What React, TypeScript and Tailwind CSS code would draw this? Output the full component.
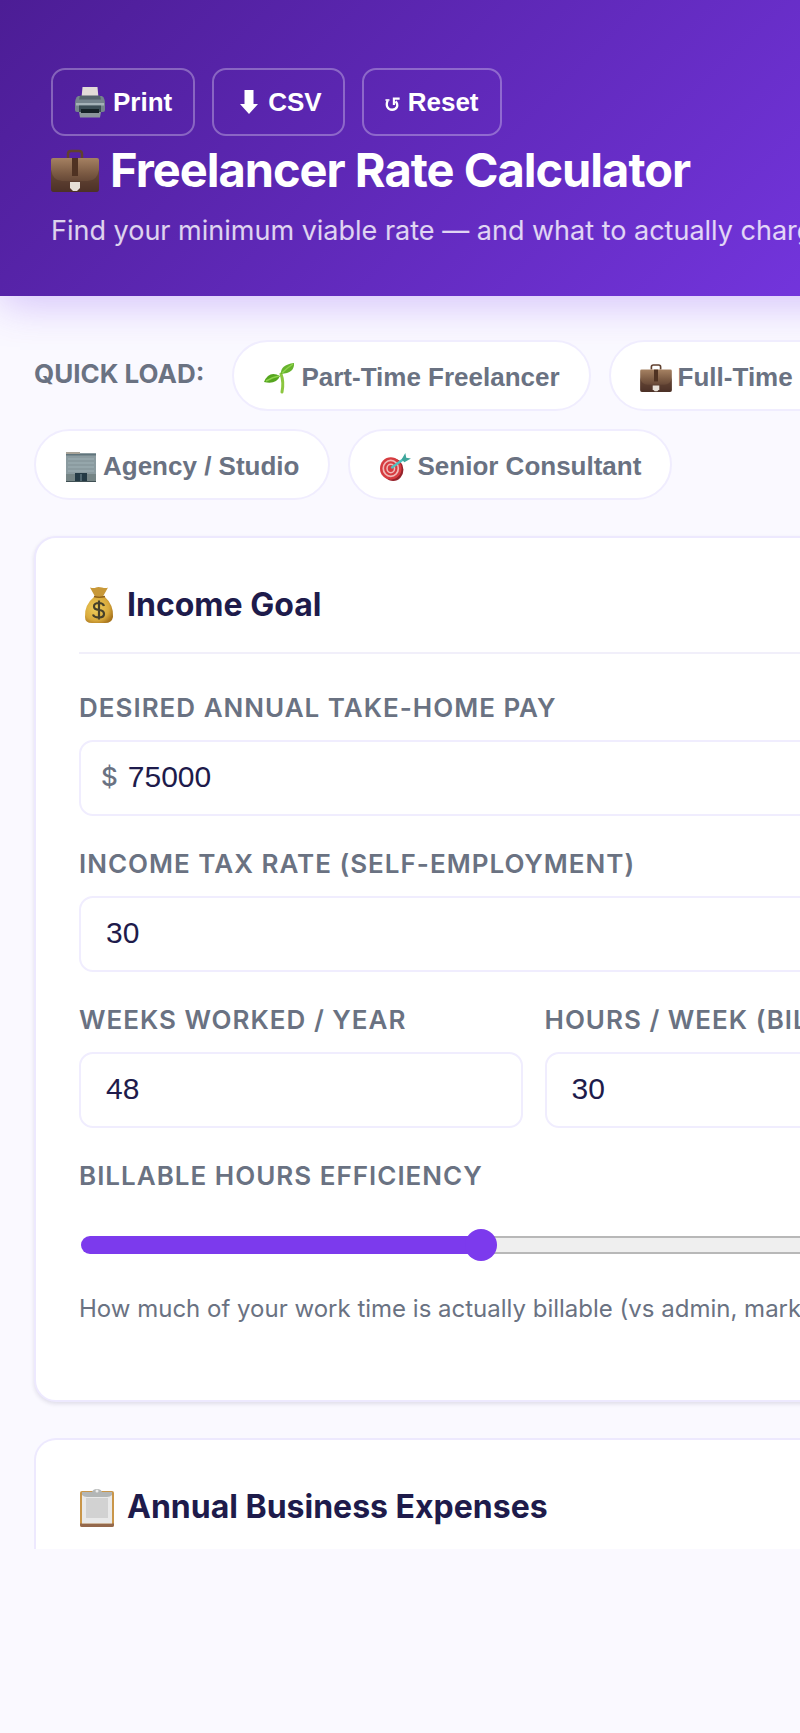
import { useState } from "react";
import type { ReactNode } from "react";

type IconProps = { className?: string };

function PrinterIcon({ className }: IconProps) {
  return (
    <svg viewBox="0 0 32 32" className={className} aria-hidden="true">
      <path d="M8.500 1h15l1 11h-17z" fill="#e2dbd8" />
      <path d="M4 10h24q3 2 3 8v6q0 2-2 2H3q-2 0-2-2v-6q0-6 3-8z" fill="#75838c" />
      <path d="M6 9.500h20l1 4H5z" fill="#55636b" />
      <path d="M2 17h28v2.500H2z" fill="#a5b2b8" />
      <path d="M5 19.500h22v7H5z" fill="#3c4d55" />
      <path d="M5 26h22l-1 5.500H6z" fill="#8b969b" />
      <path d="M7 23h18v4H7z" fill="#152126" />
    </svg>
  );
}

function BriefcaseIcon({ className }: IconProps) {
  return (
    <svg viewBox="0 0 48 44" className={className} aria-hidden="true">
      <defs>
        <linearGradient id="leather" x1="0" y1="0" x2="0" y2="1">
          <stop offset="0" stopColor="#a58162" />
          <stop offset="0.450" stopColor="#7b5a43" />
          <stop offset="1" stopColor="#4b3026" />
        </linearGradient>
      </defs>
      <path d="M17 10V6q0-3 3-3h8q3 0 3 3v4" fill="none" stroke="#60402f" strokeWidth="2.500" />
      <path d="M2 10h44q2 0 2 2v29q0 3-3 3H3q-3 0-3-3V12q0-2 2-2z" fill="url(#leather)" />
      <path d="M0 22q2 11 11 11h26q9 0 11-11v19q0 3-3 3H3q-3 0-3-3z" fill="#4e3227" opacity="0.500" />
      <path d="M21 10h6v18h-6z" fill="#4f3222" />
      <path d="M19 34h10v6l-3 3h-4l-3-3z" fill="#e6dfd6" />
    </svg>
  );
}

function DownArrowIcon({ className }: IconProps) {
  return (
    <svg viewBox="0 0 20 26" className={className} aria-hidden="true">
      <path d="M5.500 1h9v14H19l-9 10L1 15h4.500z" fill="currentColor" />
    </svg>
  );
}

function ResetIcon({ className }: IconProps) {
  return (
    <svg viewBox="0 0 18 18" className={className} aria-hidden="true">
      <path d="M3 5C0.500 10.500 3 15.500 8 15.500c5.500 0 7.500-5 4-9.500" fill="none" stroke="currentColor" strokeWidth="2.600" />
      <path d="M10 10V3h6.500" fill="none" stroke="currentColor" strokeWidth="2.400" />
      <path d="M0.500 4.500H5" fill="none" stroke="currentColor" strokeWidth="1.800" />
    </svg>
  );
}

function SeedlingIcon({ className }: IconProps) {
  return (
    <svg viewBox="0 0 32 32" className={className} aria-hidden="true">
      <path d="M18 12q3 8 1 18" fill="none" stroke="#8cc63f" strokeWidth="3" strokeLinecap="round" />
      <path d="M18 12q-1-9 13-11 1 10-13 11z" fill="#67b32e" />
      <path d="M17 14Q6 8 1 20q12 3 16-6z" fill="#55a51f" />
      <path d="M19 11q5-5 11-9M3 19q7-4 13-5" fill="none" stroke="#8ed44b" strokeWidth="1.500" />
    </svg>
  );
}

function OfficeIcon({ className }: IconProps) {
  return (
    <svg viewBox="0 0 32 32" className={className} aria-hidden="true">
      <path d="M1 2h30v29H1z" fill="#8b9ba0" />
      <path d="M1 1h14v2H1z" fill="#a8a398" />
      <path d="M1 3h30v1.500H1z" fill="#60747c" />
      <path d="M3 8h26M3 12h26M3 16h26M3 20h26" stroke="#99aaaf" strokeWidth="1.500" />
      <path d="M1 23h9v8H1zM22 23h9v8h-9z" fill="#768586" />
      <path d="M10 22h12v9H10z" fill="#243a45" />
      <path d="M15 23h2v8h-2z" fill="#4f6670" />
      <path d="M1 30h30v1H1z" fill="#3f5054" />
    </svg>
  );
}

function TargetIcon({ className }: IconProps) {
  return (
    <svg viewBox="0 0 34 32" className={className} aria-hidden="true">
      <ellipse cx="15" cy="19" rx="11" ry="12" fill="#96222b" />
      <ellipse cx="12.500" cy="17.500" rx="11.500" ry="12" fill="#d63c40" />
      <ellipse cx="12.500" cy="17.500" rx="8" ry="8.500" fill="none" stroke="#f0b9b7" strokeWidth="1.800" />
      <ellipse cx="12.500" cy="17.500" rx="4" ry="4.500" fill="none" stroke="#f0b9b7" strokeWidth="1.600" />
      <path d="M13 17 27 7" stroke="#4fc3c0" strokeWidth="2.500" />
      <path d="m24 8 4-7 1 5 5 1-7 4z" fill="#3fa69c" />
    </svg>
  );
}

function MoneyBagIcon({ className }: IconProps) {
  return (
    <svg viewBox="0 0 30 38" className={className} aria-hidden="true">
      <defs>
        <radialGradient id="sack" cx="0.400" cy="0.450" r="0.650">
          <stop offset="0" stopColor="#efcf5c" />
          <stop offset="0.700" stopColor="#d8a93c" />
          <stop offset="1" stopColor="#a8741c" />
        </radialGradient>
      </defs>
      <path d="M6 1.500q4 1 6 0t6 0 6 0l-5 9h-8z" fill="#c89838" />
      <path d="M11 10h9q10 9 9 21-1 6-8 6H8q-7 0-7-6Q0 19 11 10z" fill="url(#sack)" />
      <path d="M10 10.500q5 1.500 11 0" stroke="#8d601b" strokeWidth="1.600" fill="none" />
      <path d="M20 20q-1-3-5-3-5 0-5 3.500 0 3 5 3.500t5 4q0 3.500-5 3.500-5 0-6-3M15 14.500v19" fill="none" stroke="#46402a" strokeWidth="2.200" />
    </svg>
  );
}

function ClipboardIcon({ className }: IconProps) {
  return (
    <svg viewBox="0 0 36 40" className={className} aria-hidden="true">
      <rect x="1" y="3" width="34" height="36" rx="2" fill="#c9964a" />
      <path d="M1 35.500h34V37q0 2-2 2H3q-2 0-2-2z" fill="#94684c" />
      <path d="M3 5h30v30.500H3z" fill="#e9e9e9" />
      <path d="M7 10h22v20H7z" fill="#d2d2d2" />
      <path d="M3 4h10q1-3 5-3t5 3h10v3q-2 2-5 2H8q-3 0-5-2z" fill="#b3b6b6" />
      <circle cx="18" cy="3" r="1.500" fill="#ececec" />
    </svg>
  );
}

function HeaderButton({ icon, children }: { icon: ReactNode; children: ReactNode }) {
  return (
    <button
      type="button"
      className="flex h-[68px] items-center gap-[7px] rounded-[14px] border-2 border-white/30 px-[21px] font-['Liberation_Sans',sans-serif] text-[26px] font-bold"
    >
      {icon}
      {children}
    </button>
  );
}

function Preset({ icon, children }: { icon: ReactNode; children: ReactNode }) {
  return (
    <button
      type="button"
      className="flex h-[71px] items-center gap-1.5 rounded-full border-2 border-[#f0edfe] bg-white px-[29px] pt-1 font-['Liberation_Sans',sans-serif] text-[26px] font-bold text-gray-500"
    >
      {icon}
      {children}
    </button>
  );
}

function CardTitle({ icon, children }: { icon: ReactNode; children: ReactNode }) {
  return (
    <h2 className="flex h-[72px] items-start gap-3 border-b-2 border-[#f1effa] text-[32px] leading-[46px] font-bold text-[#1e1b4b]">
      {icon}
      {children}
    </h2>
  );
}

type FieldProps = { id: string; label: string; value: string; prefix?: string };

function Field({ id, label, value, prefix }: FieldProps) {
  const [text, setText] = useState(value);
  return (
    <div className="mb-7 min-w-0">
      <label htmlFor={id} className="mb-3 block text-[26px] leading-[40px] font-semibold tracking-[1px] whitespace-nowrap text-gray-500 uppercase">
        {label}
      </label>
      <div className="flex h-[76px] items-center rounded-[14px] border-2 border-[#f0edfe] bg-white px-[25px] pb-1 has-[span]:px-5">
        {prefix && <span className="mr-2.5 text-[26px] font-medium text-gray-500">{prefix}</span>}
        <input
          id={id}
          type="text"
          inputMode="numeric"
          value={text}
          onChange={(e) => setText(e.target.value)}
          className="w-full min-w-0 bg-transparent font-['Liberation_Sans',sans-serif] text-[30px] text-[#1e1b4b] outline-none"
        />
      </div>
    </div>
  );
}

function EfficiencySlider() {
  const [value, setValue] = useState(44);
  return (
    <div>
      <label htmlFor="efficiency" className="block text-[26px] leading-[40px] font-semibold tracking-[1px] text-gray-500 uppercase">
        Billable Hours Efficiency
      </label>
      <div className="px-0.5">
        <input
          id="efficiency"
          type="range"
          min={0}
          max={100}
          value={value}
          onChange={(e) => setValue(Number(e.target.value))}
          className="mt-10 block h-[18px] w-full appearance-none rounded-full [&::-webkit-slider-thumb]:size-8 [&::-webkit-slider-thumb]:appearance-none [&::-webkit-slider-thumb]:rounded-full [&::-webkit-slider-thumb]:bg-[#7c3aed]"
          style={{
            background: `linear-gradient(#7c3aed, #7c3aed) left / ${value}% 100% no-repeat, linear-gradient(#b8b8b8 2px, #efefef 2px, #efefef 16px, #b8b8b8 16px)`,
          }}
        />
      </div>
      <p className="mt-9 text-[24px] leading-[38px] whitespace-nowrap text-gray-500">
        How much of your work time is actually billable (vs admin, marketing)
      </p>
    </div>
  );
}

export default function App() {
  return (
    <div className="min-h-screen w-full overflow-hidden bg-[#faf9ff] font-['Inter',sans-serif] text-[#1e1b4b]">
      <div className="min-w-[1067px]">
        <header className="bg-linear-[135deg] from-[#4c1d95] to-[#7c3aed] px-[51px] pt-[68px] pb-11 text-white shadow-[0_8px_40px_rgba(124,58,237,0.3)]">
          <div className="flex gap-[17px]">
            <HeaderButton icon={<PrinterIcon className="size-8" />}>Print</HeaderButton>
            <HeaderButton icon={<DownArrowIcon className="ml-1 mr-0.5 h-[26px] w-5" />}>CSV</HeaderButton>
            <HeaderButton icon={<ResetIcon className="mt-1 size-4" />}>Reset</HeaderButton>
          </div>
          <h1 className="flex items-center gap-[11px] pt-1 text-[47px] leading-[60px] font-bold tracking-[-1px]">
            <BriefcaseIcon className="h-11 w-12" />
            Freelancer Rate Calculator
          </h1>
          <p className="mt-[9px] text-[27px] leading-[43px] whitespace-nowrap text-white/80">
            Find your minimum viable rate — and what to actually charge
          </p>
        </header>

        <main className="px-[34px] pt-11">
          <div className="mb-9 flex flex-wrap items-center gap-[18px]">
            <span className="mr-2.5 pb-1 text-[26px] font-bold text-gray-500 uppercase">Quick load:</span>
            <Preset icon={<SeedlingIcon className="size-8" />}>Part-Time Freelancer</Preset>
            <Preset icon={<BriefcaseIcon className="h-[29px] w-8" />}>Full-Time Freelancer</Preset>
            <Preset icon={<OfficeIcon className="size-8" />}>Agency / Studio</Preset>
            <Preset icon={<TargetIcon className="h-[30px] w-8" />}>Senior Consultant</Preset>
          </div>

          <section className="mb-9 rounded-[22px] border-2 border-[#ede9fe] bg-white px-[43px] pt-11 pb-[72px] shadow-[0_2px_4px_rgba(30,27,75,0.12)]">
            <CardTitle icon={<MoneyBagIcon className="ml-1 mt-1 h-[38px] w-8" />}>Income Goal</CardTitle>
            <div className="pt-[34px]">
              <Field id="pay" label="Desired Annual Take-Home Pay" value="75000" prefix="$" />
              <Field id="tax" label="Income Tax Rate (Self-Employment)" value="30" />
              <div className="grid grid-cols-2 gap-x-[22px]">
                <Field id="weeks" label="Weeks Worked / Year" value="48" />
                <Field id="hours" label="Hours / Week (Billable)" value="30" />
              </div>
              <EfficiencySlider />
            </div>
          </section>

          <section className="h-[111px] overflow-hidden rounded-t-[22px] border-2 border-b-0 border-[#ede9fe] bg-white px-[43px] pt-11">
            <CardTitle icon={<ClipboardIcon className="mt-1 h-10 w-9" />}>Annual Business Expenses</CardTitle>
          </section>
        </main>
      </div>
    </div>
  );
}
